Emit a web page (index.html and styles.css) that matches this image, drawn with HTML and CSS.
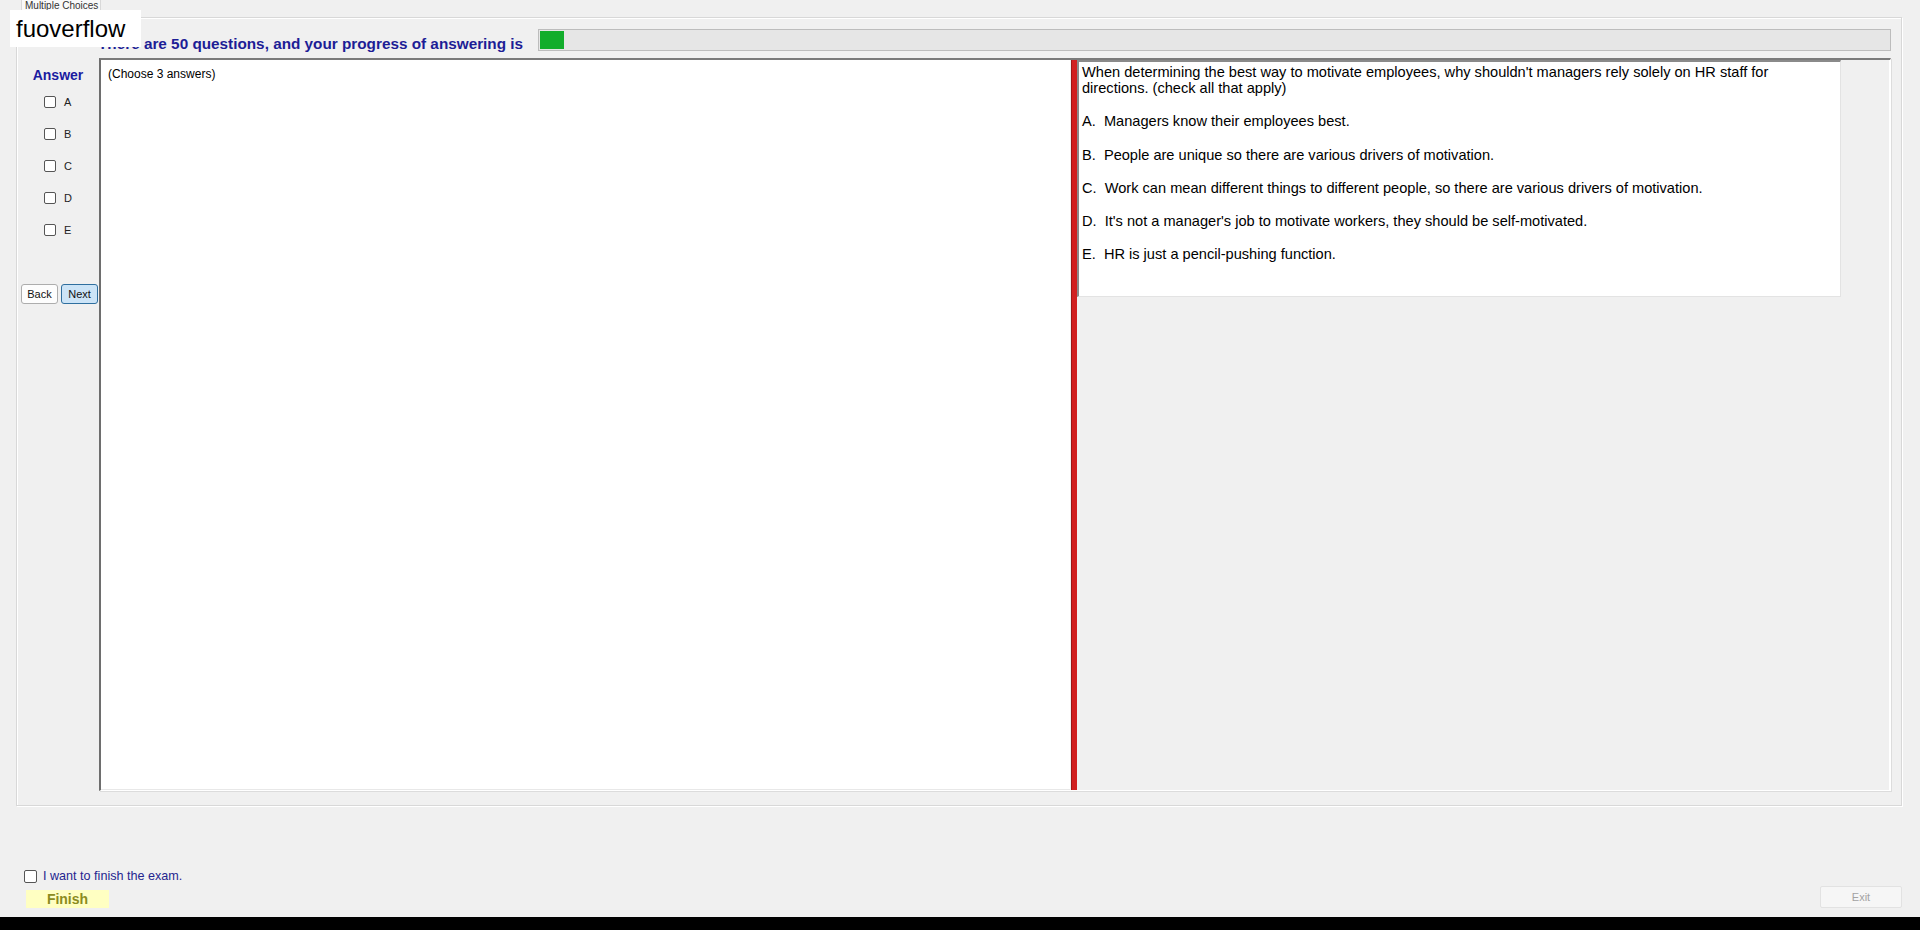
FILE: index.html
```html
<!DOCTYPE html>
<html lang="en">
<head>
<meta charset="UTF-8">
<title>Multiple Choices</title>
<link rel="stylesheet" href="styles.css">
</head>
<body>
<div class="tabs">
  <div class="tab">Multiple Choices</div>
</div>
<div class="mark">fuoverflow</div>

<div class="page">
  <div class="progress-row">
    <span class="progress-label">There are 50 questions, and your progress of answering is</span>
    <div class="bar"><div class="bar-fill"></div></div>
  </div>

  <div class="main">
    <div class="answer-col">
      <div class="answer-title">Answer</div>
      <label class="opt"><input type="checkbox"> A</label>
      <label class="opt"><input type="checkbox"> B</label>
      <label class="opt"><input type="checkbox"> C</label>
      <label class="opt"><input type="checkbox"> D</label>
      <label class="opt"><input type="checkbox"> E</label>
      <div class="nav">
        <button class="btn">Back</button>
        <button class="btn btn-focus">Next</button>
      </div>
    </div>

    <div class="split">
      <div class="left-pane">(Choose 3 answers)</div>
      <div class="splitter"></div>
      <div class="right-pane">
        <div class="question">
          <p>When determining the best way to motivate employees, why shouldn't managers rely solely on HR staff for<br>directions. (check all that apply)</p>
          <p>A.  Managers know their employees best.</p>
          <p>B.  People are unique so there are various drivers of motivation.</p>
          <p>C.  Work can mean different things to different people, so there are various drivers of motivation.</p>
          <p>D.  It's not a manager's job to motivate workers, they should be self-motivated.</p>
          <p>E.  HR is just a pencil-pushing function.</p>
        </div>
      </div>
    </div>
  </div>
</div>

<div class="footer">
  <div class="finish-col">
    <label class="finish-check"><input type="checkbox"> I want to finish the exam.</label>
    <button class="finish">Finish</button>
  </div>
  <button class="exit" disabled>Exit</button>
</div>
<div class="taskbar"></div>
</body>
</html>
```

FILE: styles.css
```css
body {
  margin: 0;
  background: #f0f0f0;
  font-family: "Liberation Sans", Arial, sans-serif;
  color: #000;
  height: 930px;
  overflow: hidden;
}

.tabs {
  height: 17px;
  padding-left: 21px;
  box-sizing: border-box;
}
.tab {
  display: inline-block;
  width: 80px;
  height: 14px;
  box-sizing: border-box;
  border: 1px solid #d9d9d9;
  border-top: none;
  background: #f9f9f9;
  font-size: 10px;
  line-height: 10px;
  color: #333;
  padding: 1px 0 0 3px;
  white-space: nowrap;
  overflow: hidden;
}

.mark {
  position: absolute;
  left: 10px;
  top: 10px;
  width: 131px;
  height: 37px;
  background: #fff;
  font-size: 24px;
  line-height: 37px;
  padding-left: 6px;
  box-sizing: border-box;
  color: #000;
}

.page {
  margin-left: 16px;
  width: 1886px;
  height: 789px;
  box-sizing: border-box;
  border: 1px solid #d8d8d8;
  box-shadow: inset 1px 1px 0 #fff, 1px 1px 0 #fff;
  padding: 11px 10px 14px 4px;
}

.progress-row {
  display: flex;
  align-items: center;
  height: 22px;
}
.progress-label {
  margin-left: 77px;
  width: 440px;
  padding-top: 8px;
  font-weight: bold;
  font-size: 15.3px;
  color: #1d1d96;
  white-space: nowrap;
}
.bar {
  flex: 1;
  height: 22px;
  box-sizing: border-box;
  border: 1px solid #bcbcbc;
  background: #e6e6e6;
  padding: 1px;
}
.bar-fill {
  width: 24px;
  height: 100%;
  background: #12ad2b;
}

.main {
  display: flex;
  margin-top: 7px;
  height: 733px;
}

.answer-col {
  width: 78px;
  display: flex;
  flex-direction: column;
}
.answer-title {
  margin-top: 9px;
  padding-right: 4px;
  height: 16px;
  line-height: 16px;
  text-align: center;
  font-weight: bold;
  font-size: 14px;
  color: #1b1ba0;
}
.opt {
  display: flex;
  align-items: center;
  height: 32px;
  padding-left: 23px;
  font-size: 11px;
  color: #222;
}
.opt:first-of-type {
  margin-top: 3px;
}
input[type="checkbox"] {
  appearance: none;
  -webkit-appearance: none;
  width: 12px;
  height: 12px;
  margin: 0 8px 0 0;
  border: 1px solid #555;
  border-radius: 2px;
  background: #fff;
}
.nav {
  display: flex;
  gap: 3px;
  margin-top: 38px;
}
.btn {
  width: 37px;
  height: 20px;
  padding: 0;
  font-family: "Liberation Sans", Arial, sans-serif;
  font-size: 11px;
  color: #111;
  background: #fdfdfd;
  border: 1px solid #adadad;
  border-radius: 3px;
}
.btn-focus {
  background: #cce4f7;
  border-color: #2f6f9f;
}

.split {
  flex: 1;
  display: flex;
  border-top: 2px solid #7a7a7a;
  border-left: 2px solid #6e6e6e;
  border-right: 1px solid #fff;
  border-bottom: 1px solid #fff;
  box-shadow: 1px 1px 0 #dcdcdc;
}
.left-pane {
  width: 969px;
  background: #fff;
  font-size: 12px;
  padding: 7px 7px;
  box-sizing: border-box;
  border-bottom: 1px solid #e8e8e8;
}
.splitter {
  width: 5px;
  margin-left: 1px;
  background: #d11f1f;
  border-left: 1px solid #9e1616;
}
.right-pane {
  flex: 1;
  background: #f0f0f0;
  border-right: 1px solid #fff;
}
.question {
  width: 764px;
  height: 237px;
  box-sizing: border-box;
  background: #fff;
  border-top: 2px solid #8a8a8a;
  border-left: 2px solid #8a8a8a;
  border-bottom: 1px solid #e3e3e3;
  border-right: 1px solid #e3e3e3;
  padding: 2px 3px 0 3px;
  font-size: 14.6px;
  line-height: 16px;
}
.question p {
  margin: 0 0 17.3px;
  white-space: pre-wrap;
}

.footer {
  height: 111px;
  display: flex;
  justify-content: space-between;
  align-items: flex-end;
  padding: 0 18px 9px 24px;
  box-sizing: border-box;
}
.finish-col {
  display: flex;
  flex-direction: column;
}
.finish-check {
  display: flex;
  align-items: center;
  height: 16px;
  font-size: 12.6px;
  color: #25258f;
}
.finish-check input {
  width: 13px;
  height: 13px;
  margin-right: 6px;
}
.finish {
  margin: 6px 0 0 2px;
  width: 83px;
  height: 18px;
  padding: 0;
  border: none;
  background: #ffffc2;
  font-family: "Liberation Sans", Arial, sans-serif;
  font-weight: bold;
  font-size: 14px;
  color: #8b8b20;
}
.exit {
  width: 82px;
  height: 22px;
  padding: 0;
  border: 1px solid #e2e2e2;
  border-radius: 2px;
  background: #f6f6f6;
  font-family: "Liberation Sans", Arial, sans-serif;
  font-size: 11px;
  color: #a3a3a3;
}

.taskbar {
  height: 13px;
  background: #000;
}
```
